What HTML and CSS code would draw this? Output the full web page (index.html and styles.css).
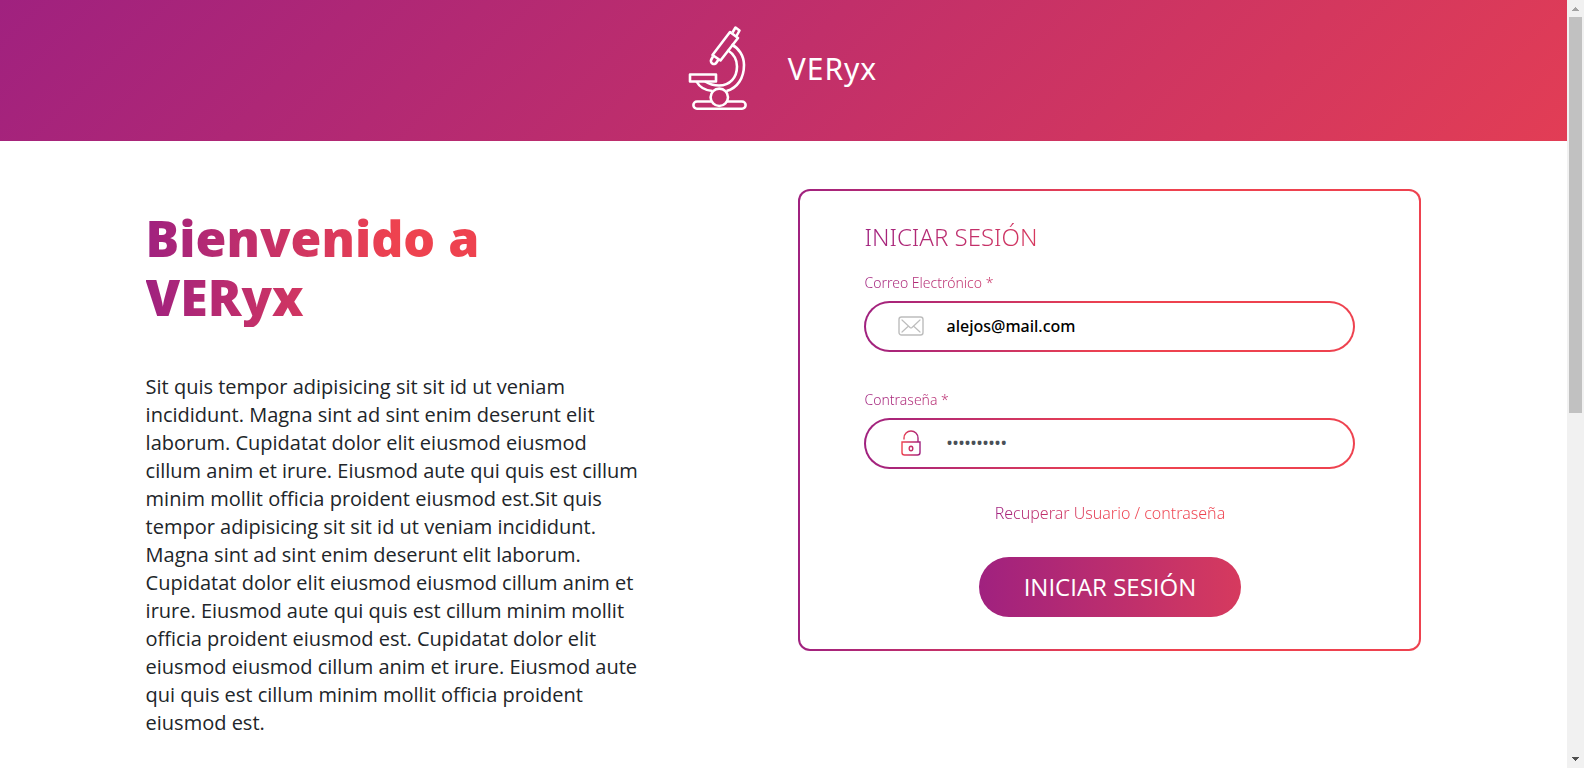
FILE: index.html
```html
<!DOCTYPE html>
<html lang="es">
<head>
<meta charset="utf-8">
<title>VERyx</title>
<link rel="stylesheet" href="styles.css">
</head>
<body>
<div class="page">
  <header class="header">
    <svg class="logo" viewBox="1 8 60 84" width="60" height="84" fill="none" stroke="#fff" stroke-width="2.600" stroke-linejoin="round" aria-hidden="true">
      <path d="M41 13 49 19 31.500 41.500 23.500 36Z"/>
      <path d="M43.500 13.500 46.500 8.500 50.500 11.500 47.500 17"/>
      <path d="M24 37.500 22.300 40.500A2.900 2.900 0 0 0 27.500 43.500L29.500 40.500"/>
      <path d="M42.500 25.500C49.500 29 55 36.500 55 46C55 59 48.500 69 37.500 72M38.500 31C44 34.500 48 40 48 47.500C48 58.500 41 66.500 30 66.500C24.500 66.500 20 65 16 62.500M7.500 62.500C11 69 17 71.500 23.500 72"/>
      <path d="M1 55.500H27V62.500H1Z"/>
      <circle cx="30.300" cy="78.300" r="8.700"/>
      <path d="M22.500 82.500H8A3.600 3.600 0 0 0 8 89.700H53A3.600 3.600 0 0 0 53 82.500H38"/>
    </svg>
    <span class="brand">VERyx</span>
  </header>
  <main class="content">
    <section class="intro">
      <h1 class="title">Bienvenido a VERyx</h1>
      <p class="text">Sit quis tempor adipisicing sit sit id ut veniam incididunt. Magna sint ad sint enim deserunt elit laborum. Cupidatat dolor elit eiusmod eiusmod cillum anim et irure. Eiusmod aute qui quis est cillum minim mollit officia proident eiusmod est.Sit quis tempor adipisicing sit sit id ut veniam incididunt. Magna sint ad sint enim deserunt elit laborum. Cupidatat dolor elit eiusmod eiusmod cillum anim et irure. Eiusmod aute qui quis est cillum minim mollit officia proident eiusmod est. Cupidatat dolor elit eiusmod eiusmod cillum anim et irure. Eiusmod aute qui quis est cillum minim mollit officia proident eiusmod est.</p>
    </section>
    <form class="card">
      <h2 class="heading">INICIAR SESIÓN</h2>
      <label class="label" for="email">Correo Electrónico *</label>
      <div class="field">
        <svg class="icon" viewBox="0 0 26 26" width="26" height="26" fill="none" stroke="#bdbdbd" stroke-linecap="round" aria-hidden="true">
          <rect x="1" y="4" width="24" height="18" rx="2.500" stroke-width="1.400"/>
          <path d="M4 7 12 14.500Q13 15.300 14 14.500L22 7M4 19 10 13.500M22 19 16 13.500" stroke-width="1.200"/>
        </svg>
        <input class="input" id="email" type="email" value="alejos@mail.com">
      </div>
      <label class="label" for="password">Contraseña *</label>
      <div class="field">
        <svg class="icon" viewBox="0 0 26 26" width="26" height="26" fill="none" stroke="url(#lock)" stroke-width="1.400" stroke-linecap="round" aria-hidden="true">
          <defs><linearGradient id="lock" gradientUnits="userSpaceOnUse" x1="4" y1="0" x2="22" y2="0"><stop stop-color="#ee424f"/><stop offset="1" stop-color="#a0217f"/></linearGradient></defs>
          <path d="M4 12H22V22.500A2.500 2.500 0 0 1 19.500 25H6.500A2.500 2.500 0 0 1 4 22.500ZM6 9V8A7 7 0 0 1 20 8V12"/>
          <ellipse cx="13" cy="18.500" rx="1.800" ry="2.200"/>
        </svg>
        <input class="input input-password" id="password" type="password" value="contrasena">
      </div>
      <a class="recover" href="#recuperar">Recuperar Usuario / contraseña</a>
      <button class="submit" type="submit">INICIAR SESIÓN</button>
    </form>
  </main>
</div>
<div class="scrollbar" aria-hidden="true">
  <svg width="17" height="17" viewBox="0 0 17 17"><path d="M8 7H9V8H10V9H11V10H12V11H5V10H6V9H7V8H8Z" fill="#a3a3a3"/></svg>
  <div class="thumb"></div>
  <svg width="17" height="17" viewBox="0 0 17 17"><path d="M5 6H12V7H11V8H10V9H9V10H8V9H7V8H6V7H5Z" fill="#505050"/></svg>
</div>
</body>
</html>
```
FILE: styles.css
```css
:root {
  --purple: #a0217f;
  --red: #ee424f;
  --fade: linear-gradient(90deg, var(--purple), var(--red) 50%);
}

* { box-sizing: border-box; }

body {
  margin: 0;
  display: flex;
  height: 100vh;
  overflow: hidden;
  background: #fff;
  color: #212529;
  font-family: "Open Sans", "Noto Sans", sans-serif;
}

.page { flex: 1; min-width: 0; }

.header {
  display: flex;
  justify-content: center;
  align-items: center;
  gap: 38px;
  height: 141px;
  padding-bottom: 4px;
  background: linear-gradient(135deg, var(--purple), #e23d55);
  color: #fff;
}

.logo { overflow: visible; }

.brand {
  font-family: "Noto Sans", sans-serif;
  font-size: 30px;
  letter-spacing: 1px;
}

.content {
  display: grid;
  grid-template-columns: 1fr 1fr;
  gap: 30px;
  align-items: start;
  width: 83.3333%;
  margin: 0 auto;
  padding: 48px 15px 0;
}

.intro { padding: 20px 20% 0 0; }

.title {
  margin: 0 0 46px;
  font-size: 50px;
  font-weight: 800;
  line-height: 59px;
  background: var(--fade);
  -webkit-background-clip: text;
  background-clip: text;
  color: transparent;
}

.text {
  margin: 0;
  font-size: 20px;
  line-height: 28px;
}

.card {
  display: flex;
  flex-direction: column;
  padding: 32px 64px;
  border: 2px solid transparent;
  border-radius: 12px;
  background: linear-gradient(#fff, #fff) padding-box, var(--fade) border-box;
}

.heading, .label, .recover {
  background: var(--fade);
  -webkit-background-clip: text;
  background-clip: text;
  color: transparent;
  font-family: "Noto Sans", sans-serif;
  font-weight: 300;
}

.heading {
  margin: 0 0 22px;
  font-size: 24px;
  line-height: 28px;
}

.label {
  margin-bottom: 8px;
  font-size: 14px;
  font-weight: 350;
  line-height: 20px;
}

.field {
  display: flex;
  align-items: center;
  gap: 20px;
  height: 51px;
  margin-bottom: 38px;
  padding: 0 32px 2px;
  border: 2px solid transparent;
  border-radius: 26px;
  background: linear-gradient(#fff, #fff) padding-box, var(--fade) border-box;
}

.icon { flex: none; }

.input {
  flex: 1;
  min-width: 0;
  padding: 0 2px;
  border: 0;
  outline: 0;
  background: none;
  color: #000;
  font: 500 16px "Noto Sans", sans-serif;
}

.input-password { color: #495057; }

.recover {
  align-self: center;
  margin: -6px 0 32px;
  font-size: 16px;
  font-weight: 350;
  line-height: 24px;
  text-decoration: none;
}

.submit {
  align-self: center;
  height: 60px;
  padding: 0 45px 2px;
  border: 0;
  border-radius: 30px;
  background: linear-gradient(90deg, var(--purple), #d63a5e);
  color: #fff;
  font: 400 24px "Open Sans", sans-serif;
}

.scrollbar {
  display: flex;
  flex-direction: column;
  width: 17px;
  background: #f1f1f1;
}

.thumb {
  flex: 1;
  margin: 0 2px;
  background: linear-gradient(#c1c1c1, #c1c1c1) top / 100% 54% no-repeat;
}
```
